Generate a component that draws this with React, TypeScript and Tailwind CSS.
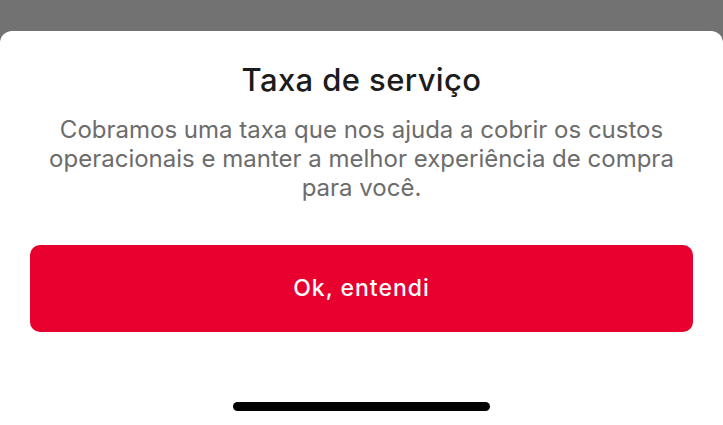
export default function App() {
  return (
    <div className="flex h-[425px] w-[723px] flex-col overflow-hidden bg-[#727272] font-['Inter',sans-serif]">
      <div className="h-[31px] shrink-0" />
      <div className="flex flex-1 flex-col rounded-t-[12px] bg-white px-[30px]">
        <h2 className="mt-[29px] text-center text-[31px] font-medium leading-[40px] tracking-[0.4px] text-[#1c1c1c]">
          Taxa de serviço
        </h2>
        <p className="mx-auto mt-[15px] max-w-[640px] text-center text-[24px] leading-[29px] text-[#6c6c6c]">
          Cobramos uma taxa que nos ajuda a cobrir os custos operacionais e
          manter a melhor experiência de compra para você.
        </p>
        <button className="mt-[43px] flex h-[87px] w-full shrink-0 items-center justify-center rounded-[10px] bg-[#e8002f] text-[23px] font-medium tracking-[1px] text-white">
          Ok, entendi
        </button>
        <div className="mt-[70px] flex justify-center">
          <div className="h-[9px] w-[257px] rounded-full bg-black" />
        </div>
      </div>
    </div>
  );
}
